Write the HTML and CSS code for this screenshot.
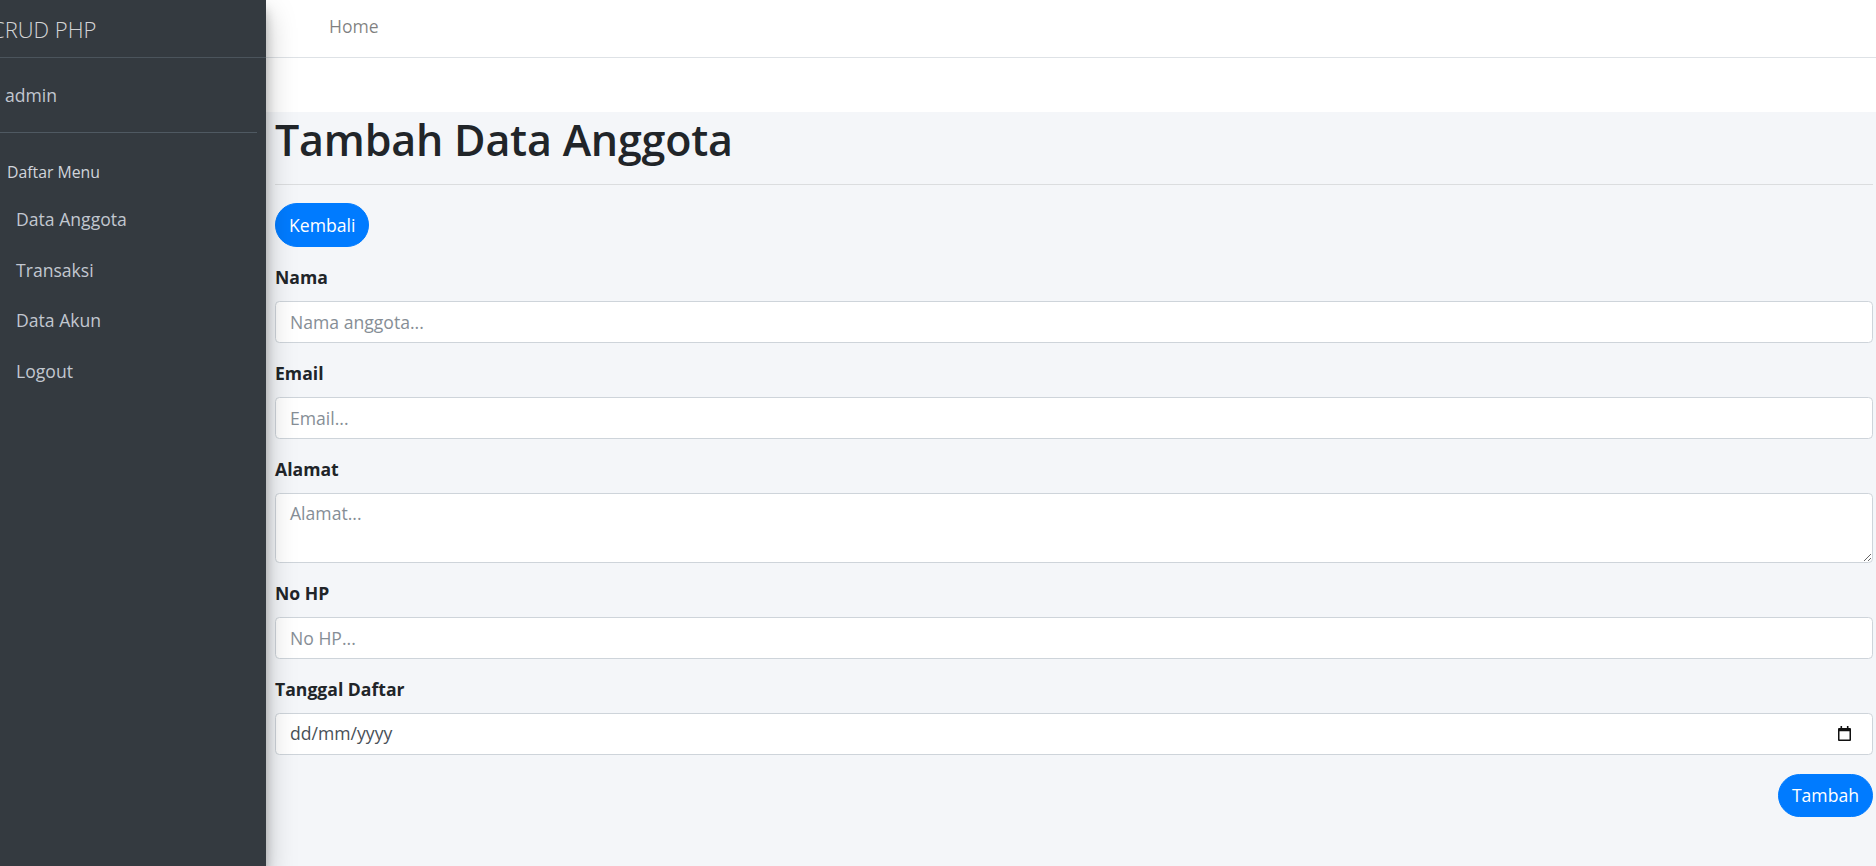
FILE: index.html
```html
<!DOCTYPE html>
<html lang="id">
<head>
<meta charset="utf-8">
<title>Tambah Data Anggota</title>
<link rel="stylesheet" href="styles.css">
</head>
<body>
<div class="wrapper">
  <aside class="sidebar">
    <div class="brand"><span class="brand-text">CRUD PHP</span></div>
    <div class="user-panel"><span class="user-name">admin</span></div>
    <nav class="menu">
      <div class="menu-header">Daftar Menu</div>
      <a class="menu-link" href="#">Data Anggota</a>
      <a class="menu-link" href="#">Transaksi</a>
      <a class="menu-link" href="#">Data Akun</a>
      <a class="menu-link" href="#">Logout</a>
    </nav>
  </aside>
  <div class="main">
    <header class="navbar">
      <a class="nav-link" href="#">Home</a>
    </header>
    <div class="spacer"></div>
    <section class="content">
      <h1 class="title">Tambah Data Anggota</h1>
      <hr class="divider">
      <div class="back-row"><a class="btn" href="#">Kembali</a></div>
      <form class="form">
        <div class="form-group">
          <label class="label">Nama</label>
          <input class="control" type="text" placeholder="Nama anggota...">
        </div>
        <div class="form-group">
          <label class="label">Email</label>
          <input class="control" type="text" placeholder="Email...">
        </div>
        <div class="form-group">
          <label class="label">Alamat</label>
          <textarea class="control textarea" placeholder="Alamat..."></textarea>
        </div>
        <div class="form-group">
          <label class="label">No HP</label>
          <input class="control" type="text" placeholder="No HP...">
        </div>
        <div class="form-group">
          <label class="label">Tanggal Daftar</label>
          <div class="control date">
            <span class="date-text">dd/mm/yyyy</span>
            <svg class="cal" width="13" height="15" viewBox="0 0 13 15"><path d="M2.5 0h1.6v2h4.8V0h1.6v2h1.5a1 1 0 0 1 1 1v11a1 1 0 0 1-1 1H1a1 1 0 0 1-1-1V3a1 1 0 0 1 1-1h1.5zM1.5 5.2v8.3h10V5.2z" fill="#111"/></svg>
          </div>
        </div>
        <div class="submit-row"><button class="btn" type="button">Tambah</button></div>
      </form>
    </section>
  </div>
</div>
</body>
</html>
```
FILE: styles.css
```css
* { box-sizing: border-box; }
html, body { margin: 0; padding: 0; }
body {
  font-family: "Open Sans", "Liberation Sans", sans-serif;
  font-size: 17.6px;
  line-height: 1.5;
  color: #212529;
  background: #ffffff;
}
.wrapper {
  display: flex;
  height: 866px;
  overflow: hidden;
}
.sidebar {
  width: 266px;
  flex: 0 0 266px;
  background: #343a40;
  position: relative;
  z-index: 2;
  box-shadow: 0 14px 28px rgba(0,0,0,.25), 0 10px 10px rgba(0,0,0,.22);
  color: #c2c7d0;
}
.brand {
  height: 58px;
  border-bottom: 1px solid #4b545c;
  display: flex;
  align-items: center;
  overflow: hidden;
}
.brand-text {
  font-size: 22px;
  font-weight: 300;
  color: rgba(255,255,255,.8);
  margin-left: -9px;
  line-height: 1;
  white-space: nowrap;
}
.user-panel {
  margin-right: 9px;
  height: 75px;
  border-bottom: 1px solid #4f5962;
  display: flex;
  align-items: center;
  padding-left: 5px;
}
.user-name {
  font-size: 17.6px;
  color: #c2c7d0;
}
.menu {
  display: flex;
  flex-direction: column;
  padding-top: 27px;
}
.menu-header {
  font-size: 15.8px;
  color: #d0d4db;
  padding-left: 7px;
  line-height: 24px;
  margin-bottom: 22px;
}
.menu-link {
  display: block;
  font-size: 17.6px;
  color: #c2c7d0;
  text-decoration: none;
  padding-left: 16px;
  height: 50.7px;
  line-height: 26px;
}
.main {
  flex: 1;
  display: flex;
  flex-direction: column;
  min-width: 0;
}
.navbar {
  height: 58px;
  border-bottom: 1px solid #dee2e6;
  background: #fff;
  display: flex;
  align-items: center;
  padding-left: 63px;
  padding-bottom: 4px;
}
.nav-link {
  color: rgba(0,0,0,.5);
  text-decoration: none;
  font-size: 17.6px;
}
.spacer {
  height: 54px;
  background: #fff;
}
.content {
  flex: 1;
  background: #f4f6f9;
  padding: 2px 3px 0 9px;
}
.title {
  margin: 0 0 8.8px;
  font-size: 43px;
  font-weight: 600;
  letter-spacing: -0.2px;
  line-height: 52.8px;
  color: #212529;
}
.divider {
  margin: 17.6px 0;
  border: 0;
  border-top: 1px solid rgba(0,0,0,.1);
  height: 0;
}
.back-row {
  margin-bottom: 17.6px;
}
.btn {
  display: inline-block;
  background: #007bff;
  color: #fff;
  border: 1px solid #007bff;
  border-radius: 30px;
  font-family: inherit;
  font-size: 17.6px;
  line-height: 26.4px;
  padding: 7.6px 13px;
  text-decoration: none;
  cursor: pointer;
}
.form { margin: 0; }
.form-group {
  margin-bottom: 17.6px;
}
.label {
  display: block;
  font-weight: 700;
  line-height: 26.4px;
  margin-bottom: 10px;
}
.control {
  display: block;
  width: 100%;
  height: 42px;
  padding: 0 14px;
  font-family: inherit;
  font-size: 17.6px;
  color: #495057;
  background: #fff;
  border: 1px solid #ced4da;
  border-radius: 4.4px;
  outline: none;
}
.control::placeholder {
  color: #868e96;
  opacity: 1;
}
.textarea {
  height: 70px;
  padding-top: 6px;
  line-height: 26.4px;
  resize: vertical;
}
.date {
  display: flex;
  align-items: center;
  justify-content: space-between;
  padding-right: 21px;
}
.date-text {
  color: #495057;
}
.cal {
  display: block;
}
.submit-row {
  display: flex;
  justify-content: flex-end;
  margin-top: 19px;
}
```
